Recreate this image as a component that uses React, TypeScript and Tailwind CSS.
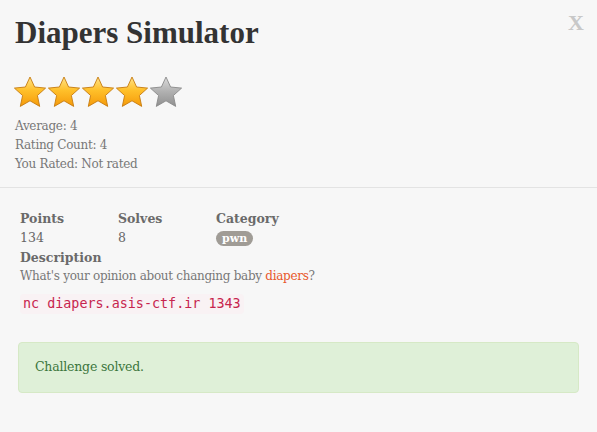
import React from 'react';

const Star: React.FC<{ filled: boolean; id: string }> = ({ filled, id }) => (
  <svg width="34" height="32" viewBox="0 0 34 32">
    <defs>
      <linearGradient id={id} x1="0" y1="0" x2="0" y2="1">
        {filled ? (
          <>
            <stop offset="0" stopColor="#ffe38a" />
            <stop offset="0.45" stopColor="#ffc02a" />
            <stop offset="1" stopColor="#f59a0a" />
          </>
        ) : (
          <>
            <stop offset="0" stopColor="#dcdcdc" />
            <stop offset="0.5" stopColor="#b0b0b0" />
            <stop offset="1" stopColor="#909090" />
          </>
        )}
      </linearGradient>
    </defs>
    <path
      d="M17 1 L21.6 11 L32.6 12.1 L24.4 19.5 L26.7 30.4 L17 24.8 L7.3 30.4 L9.6 19.5 L1.4 12.1 L12.4 11 Z"
      fill={`url(#${id})`}
      stroke={filled ? '#c57a10' : '#8a8a8a'}
      strokeWidth="0.9"
      strokeLinejoin="round"
    />
  </svg>
);

const Stat: React.FC<{ label: string; children: React.ReactNode }> = ({ label, children }) => (
  <div className="w-[98px]">
    <p className="font-bold text-[#6a6a6a] text-[12.5px] leading-[19px]">{label}</p>
    <div className="text-[#666] text-[12.5px] leading-[19px]">{children}</div>
  </div>
);

const App: React.FC = () => {
  return (
    <div
      className="w-[597px] h-[432px] bg-[#f7f7f7] relative overflow-hidden"
      style={{ fontFamily: '"DejaVu Serif", "Liberation Serif", serif' }}
    >
      <button className="absolute right-[13px] top-[12px] text-[#c8c8c8] text-[22px] leading-none font-bold" style={{ fontFamily: '"Liberation Serif", serif' }}>
        X
      </button>

      <div className="px-[15px] pt-[14px] pb-[13px]">
        <h1
          className="text-[31px] leading-[38px] text-[#333] font-bold"
          style={{ fontFamily: '"Liberation Serif", serif' }}
        >
          Diapers Simulator
        </h1>
        <div className="flex mt-[24px] -ml-[2px]">
          {[0, 1, 2, 3, 4].map(i => (
            <Star key={i} filled={i < 4} id={`star-${i}`} />
          ))}
        </div>
        <div className="mt-[9px] text-[12px] leading-[19px] text-[#777] tracking-[-0.3px]">
          <p>Average: 4</p>
          <p>Rating Count: 4</p>
          <p>You Rated: Not rated</p>
        </div>
      </div>

      <div className="border-t border-[#e3e3e3] px-[20px] pt-[21px]">
        <div className="flex">
          <Stat label="Points">134</Stat>
          <Stat label="Solves">8</Stat>
          <Stat label="Category">
            <span className="inline-block bg-[#a09c96] text-white font-bold text-[11px] leading-[15px] px-[6px] rounded-full mt-[1px]">
              pwn
            </span>
          </Stat>
        </div>
        <p className="font-bold text-[#6a6a6a] text-[12.5px] leading-[19px] mt-[1px]">Description</p>
        <p className="text-[#777] text-[12px] leading-[19px] tracking-[-0.3px]">
          What's your opinion about changing baby <span className="text-[#e8582b]">diapers</span>?
        </p>
        <code
          className="inline-block mt-[8px] bg-[#f9f2f4] text-[#c7254e] text-[13.4px] leading-[20px] px-[3px] rounded"
          style={{ fontFamily: '"DejaVu Sans Mono", "Liberation Mono", monospace' }}
        >
          nc diapers.asis-ctf.ir 1343
        </code>
      </div>

      <div className="mx-[18px] mt-[27px] h-[51px] bg-[#dff0d8] border border-[#d6e9c6] rounded-[4px] flex items-center px-[16px]">
        <p className="text-[#3c763d] text-[12.5px] tracking-[-0.2px]">Challenge solved.</p>
      </div>
    </div>
  );
};

export default App;
